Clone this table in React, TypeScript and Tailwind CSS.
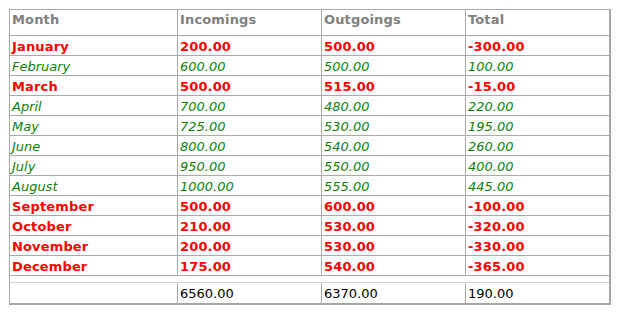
import React from "react";

type Row = { m: string; i: string; o: string; t: string; bad: boolean };

const rows: Row[] = [
  { m: "January", i: "200.00", o: "500.00", t: "-300.00", bad: true },
  { m: "February", i: "600.00", o: "500.00", t: "100.00", bad: false },
  { m: "March", i: "500.00", o: "515.00", t: "-15.00", bad: true },
  { m: "April", i: "700.00", o: "480.00", t: "220.00", bad: false },
  { m: "May", i: "725.00", o: "530.00", t: "195.00", bad: false },
  { m: "June", i: "800.00", o: "540.00", t: "260.00", bad: false },
  { m: "July", i: "950.00", o: "550.00", t: "400.00", bad: false },
  { m: "August", i: "1000.00", o: "555.00", t: "445.00", bad: false },
  { m: "September", i: "500.00", o: "600.00", t: "-100.00", bad: true },
  { m: "October", i: "210.00", o: "530.00", t: "-320.00", bad: true },
  { m: "November", i: "200.00", o: "530.00", t: "-330.00", bad: true },
  { m: "December", i: "175.00", o: "540.00", t: "-365.00", bad: true },
];

function Cells({ vals, cls }: { vals: string[]; cls: string }) {
  return (
    <>
      <div className={`w-[168px] shrink-0 border-r border-[#aaaaaa] pl-[2px] ${cls}`}>{vals[0]}</div>
      <div className={`w-[144px] shrink-0 border-r border-[#aaaaaa] pl-[2px] ${cls}`}>{vals[1]}</div>
      <div className={`w-[144px] shrink-0 border-r border-[#aaaaaa] pl-[2px] ${cls}`}>{vals[2]}</div>
      <div className={`flex-1 pl-[2px] ${cls}`}>{vals[3]}</div>
    </>
  );
}

export default function App() {
  return (
    <div className="w-[622px] h-[317px] bg-white pt-[9px] pl-[9px] text-[13px] leading-[16px] [font-family:'DejaVu_Sans',Verdana,sans-serif]">
      <div className="w-[602px] border-l border-t border-r-2 border-b-2 border-l-[#aaaaaa] border-t-[#aaaaaa] border-r-[#a6a6a6] border-b-[#a6a6a6]">
        <div className="flex h-[26px] border-b border-[#aaaaaa]">
          <Cells vals={["Month", "Incomings", "Outgoings", "Total"]} cls="pt-[2px] font-bold tracking-[0.15px] text-[#808080]" />
        </div>
        {rows.map((r) => (
          <div key={r.m} className="flex h-[20px] border-b border-[#aaaaaa]">
            <Cells
              vals={[r.m, r.i, r.o, r.t]}
              cls={`pt-[3px] ${r.bad ? "font-bold tracking-[0.15px] text-[#ff0000]" : "italic text-[#108010]"}`}
            />
          </div>
        ))}
        <div className="h-[7px] border-b border-[#d4d4d4]" />
        <div className="flex h-[20px]">
          <Cells vals={["", "6560.00", "6370.00", "190.00"]} cls="pt-[3px] text-black" />
        </div>
      </div>
    </div>
  );
}
